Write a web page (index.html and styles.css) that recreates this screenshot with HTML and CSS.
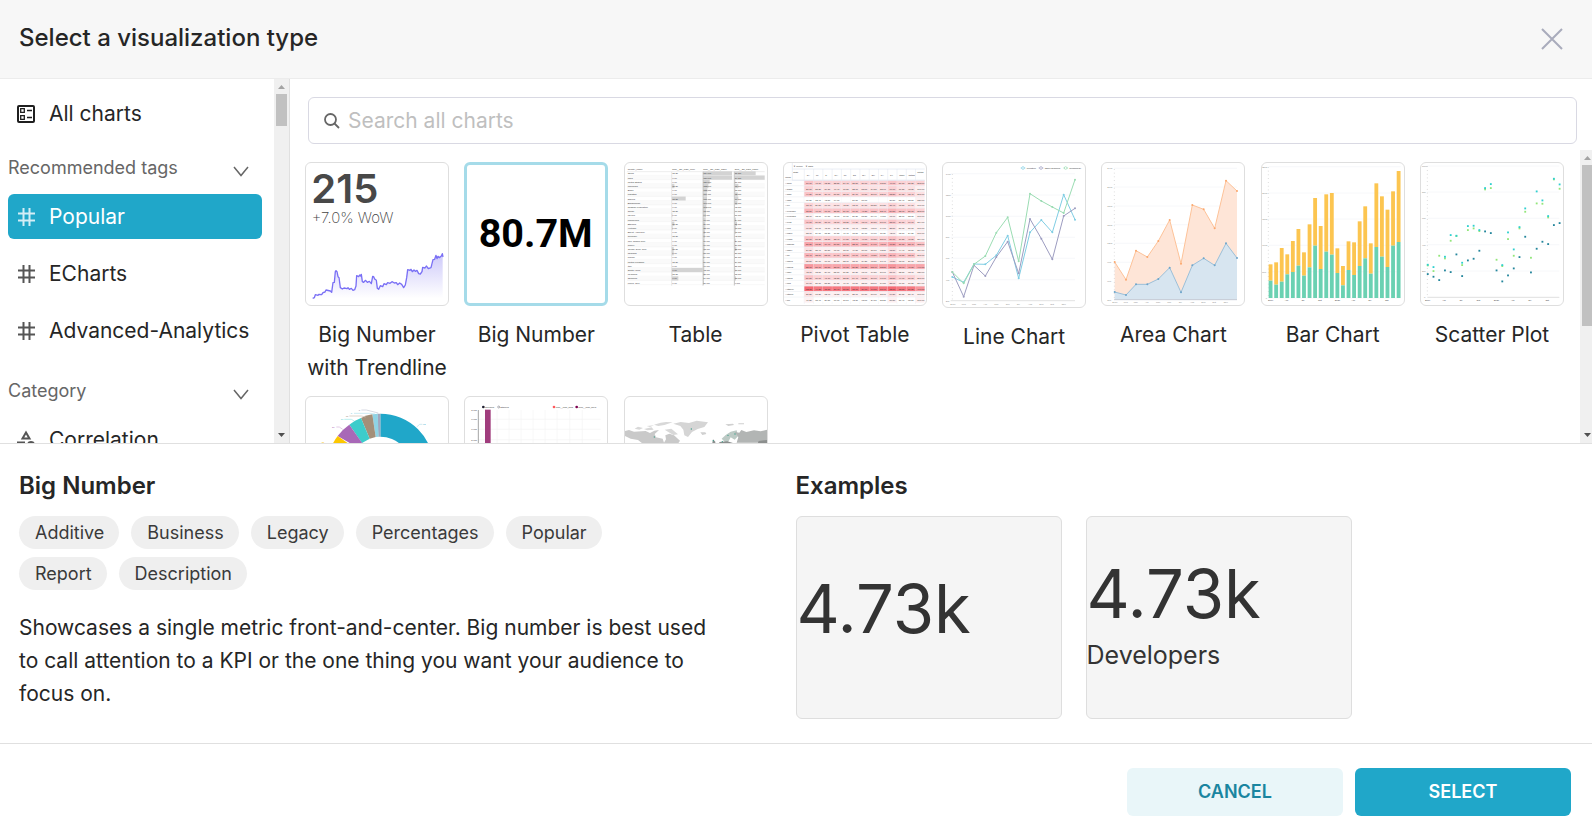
FILE: index.html
```html
<!DOCTYPE html>
<html lang="en">
<head>
<meta charset="utf-8">
<title>Select a visualization type</title>
<link rel="stylesheet" href="styles.css">
</head>
<body>
<div class="modal">
  <header class="modal-header">
    <h1 class="modal-title">Select a visualization type</h1>
    <button class="close" type="button" aria-label="Close">
      <svg width="22" height="22" viewBox="0 0 22 22"><path d="M1 1L21 21M21 1L1 21" stroke="#a9acbc" stroke-width="2" fill="none"/></svg>
    </button>
  </header>

  <div class="picker">
    <aside class="sidebar">
      <nav class="side-list">
        <button class="side-item" type="button">
          <svg class="side-icon" width="18" height="18" viewBox="0 0 18 18" fill="none" stroke="#1f1f1f"><rect x="1" y="1" width="16" height="16" rx="1" stroke-width="2"/><path d="M3.7 3.7h3.600v3.600h-3.600zM3.700 10.700h3.600v3.600h-3.600z" stroke-width="1.300"/><path d="M10 5.500h5M10 12.500h5" stroke-width="1.500"/></svg>
          All charts
        </button>
        <button class="side-heading side-heading-first" type="button">Recommended tags
          <svg class="chevron" width="16" height="11" viewBox="0 0 16 11"><path d="M1 1L8 9.500L15 1" stroke="#666" stroke-width="1.500" fill="none"/></svg>
        </button>
        <button class="side-item side-item-active" type="button">
          <svg class="side-icon" width="18" height="18" viewBox="0 0 18 18"><path d="M6.500 0V18M12.500 0V18M1 5.500H18M1 12.500H18" stroke="#d3eef6" stroke-width="2"/></svg>
          Popular
        </button>
        <button class="side-item" type="button">
          <svg class="side-icon" width="18" height="18" viewBox="0 0 18 18"><path d="M6.500 0V18M12.500 0V18M1 5.500H18M1 12.500H18" stroke="#555" stroke-width="2"/></svg>
          ECharts
        </button>
        <button class="side-item" type="button">
          <svg class="side-icon" width="18" height="18" viewBox="0 0 18 18"><path d="M6.500 0V18M12.500 0V18M1 5.500H18M1 12.500H18" stroke="#555" stroke-width="2"/></svg>
          Advanced-Analytics
        </button>
        <button class="side-heading side-heading-next" type="button">Category
          <svg class="chevron" width="16" height="11" viewBox="0 0 16 11"><path d="M1 1L8 9.500L15 1" stroke="#666" stroke-width="1.500" fill="none"/></svg>
        </button>
        <button class="side-item" type="button">
          <svg class="side-icon" width="18" height="20" viewBox="0 0 18 20" fill="none" stroke="#555" stroke-width="2"><path d="M9 2.500L12.500 8.500H5.500Z"/><path d="M1 12.500h6v6H1z"/><circle cx="14" cy="15" r="3"/></svg>
          Correlation
        </button>
      </nav>
      <div class="scrollbar">
        <svg width="15" height="15" viewBox="0 0 15 15"><path d="M4 10L7.500 6L11 10Z" fill="#a3a3a3"/></svg>
        <div class="thumb thumb-short"></div>
        <svg class="scroll-down" width="15" height="15" viewBox="0 0 15 15"><path d="M4 5L7.500 9L11 5Z" fill="#505050"/></svg>
      </div>
    </aside>

    <main class="browser">
      <label class="search">
        <svg width="16" height="16" viewBox="0 0 16 16" fill="none" stroke="#666" stroke-width="1.800"><circle cx="6.500" cy="6.500" r="5.500"/><path d="M10.500 10.500L15 15"/></svg>
        <input class="search-input" type="text" placeholder="Search all charts" aria-label="Search all charts">
      </label>
      <div class="gallery-wrap">
        <div class="gallery">
          <button class="tile" type="button">
            <span class="thumbnail"><svg viewBox="19 24 426 426">
              <defs><linearGradient id="trend" x1="0" y1="0" x2="0" y2="1"><stop offset="0" stop-color="#cfcbfa"/><stop offset="1" stop-color="#fff"/></linearGradient></defs>
              <text class="num-215" x="35" y="145">215</text>
              <text class="num-wow" x="36" y="205">+7.0% WoW</text>
              <path fill="url(#trend)" d="M40 430L80 408L97 410L110 350L122 400L165 405L175 362L186 362L190 380L214 385L221 364L237 402L250 390L275 382L302 388L314 398L325 343L350 348L362 358L372 336L395 340L402 312L429 300V430Z"/>
              <path class="trend-line" d="M39 430L44 428L47 419L55 421L58 418L66 419L70 413L76 411L79 405L92 408L96 412L100 383L104 382L107 350L109 347L112 350L115 365L118 368L122 398L128 402L133 399L142 401L145 398L149 403L155 400L160 406L165 404L169 393L171 362L177 365L180 360L183 363L185 358L188 380L192 382L197 376L203 382L209 379L215 386L219 364L222 365L225 372L230 376L233 400L237 403L242 392L249 395L253 386L260 389L264 383L271 385L277 380L284 384L290 383L294 389L300 384L306 388L312 398L317 390L321 368L324 344L331 346L334 343L338 350L343 345L347 349L352 346L357 356L362 357L367 350L369 337L376 339L380 333L386 341L394 338L400 314L405 313L409 301L412 311L415 304L419 308L425 303L428 296L430 306"/>
            </svg></span>
            <span class="tile-label">Big Number with Trendline</span>
          </button>
          <button class="tile tile-selected" type="button">
            <span class="thumbnail"><svg viewBox="496 24 426 426"><text class="num-807" x="708" y="277">80.7M</text></svg></span>
            <span class="tile-label">Big Number</span>
          </button>
          <button class="tile" type="button">
            <span class="thumbnail"><svg id="table-chart" viewBox="28 24 426 426"></svg></span>
            <span class="tile-label">Table</span>
          </button>
          <button class="tile" type="button">
            <span class="thumbnail"><svg id="pivot-chart" viewBox="28 24 426 426"></svg></span>
            <span class="tile-label">Pivot Table</span>
          </button>
          <button class="tile" type="button">
            <span class="thumbnail thumbnail-tall"><svg id="line-chart" viewBox="25 24 426 432"></svg></span>
            <span class="tile-label">Line Chart</span>
          </button>
          <button class="tile" type="button">
            <span class="thumbnail"><svg id="area-chart" viewBox="22 24 426 426"></svg></span>
            <span class="tile-label">Area Chart</span>
          </button>
          <button class="tile" type="button">
            <span class="thumbnail"><svg id="bar-chart" viewBox="22 24 426 426"></svg></span>
            <span class="tile-label">Bar Chart</span>
          </button>
          <button class="tile" type="button">
            <span class="thumbnail"><svg id="scatter-chart" viewBox="499 24 426 426"></svg></span>
            <span class="tile-label">Scatter Plot</span>
          </button>
          <button class="tile" type="button" aria-label="Pie Chart">
            <span class="thumbnail"><svg viewBox="19 37 426 426">
              <path fill="#20a7c9" d="M242 87A160 160 0 0 1 402 247H333A91 91 0 0 0 242 156Z"/>
              <path fill="#a1a6bd" d="M233 87H242V156H236Z"/>
              <path fill="#8fd3e4" d="M218 89L234 87L237 156L228 157Z"/>
              <path fill="#a38f79" d="M184 100Q201 91 218 89L228 157L210 162Z"/>
              <path fill="#3ccccb" d="M149 120Q165 107 184 100L210 162L187 175Z"/>
              <path fill="#a868b7" d="M114 154Q128 134 149 120L187 174L176 190Z"/>
              <path fill="#fcc700" d="M85 215Q95 178 114 154L175 197L160 230Z"/>
              <g fill="none" stroke-width="2"><path stroke="#c3c6d3" d="M185 76H200L236 85"/><path stroke="#b4e1ec" d="M163 86H210L226 88M351 127L360 119H368"/><path stroke="#cdbfb1" d="M149 94H185L198 97"/><path stroke="#9ae5e5" d="M134 104H155L164 109"/><path stroke="#d4b4db" d="M110 127H119L129 134"/></g>
              <g class="tiny"><text x="177" y="79" fill="#889">8</text><text x="153" y="89" fill="#6cc5db">5</text><text x="138" y="97" fill="#a38f79">15</text><text x="123" y="107" fill="#3ccccb">17</text><text x="97" y="130" fill="#a868b7">20</text><text x="370" y="122" fill="#20a7c9">98</text><text x="66" y="176" fill="#fcc700">21</text></g>
            </svg></span>
          </button>
          <button class="tile" type="button" aria-label="Histogram">
            <span class="thumbnail"><svg viewBox="496 37 426 426">
              <path d="M536 104H903M536 134H903M536 165H903M592 76V200M628 76V200M664 76V200M700 76V200M736 76V200M772 76V200M810 76V200M848 76V200" stroke="#f5f5f5" stroke-width="2"/>
              <path d="M536 76V200" stroke="#777" stroke-width="2"/>
              <rect x="556" y="75" width="17" height="130" fill="#a03d7d"/>
              <circle cx="551" cy="67" r="4" fill="#223"/><circle cx="597" cy="67" r="3" fill="none" stroke="#223"/><circle cx="763" cy="67" r="4" fill="#ff5a5f"/><circle cx="831" cy="67" r="4" fill="#7b0051"/>
              <g class="tiny dark"><text x="556" y="70">Grouped</text><text x="602" y="70">Stacked</text><text x="768" y="70">num__num_girls</text><text x="836" y="70">num__num_boys</text><text x="515" y="79">8.00k</text><text x="515" y="107">7.00k</text><text x="515" y="137">6.00k</text><text x="515" y="168">5.00k</text></g>
            </svg></span>
          </button>
          <button class="tile" type="button" aria-label="World Map">
            <span class="thumbnail"><svg viewBox="973 37 426 426">
              <path fill="#c9c9c9" d="M973 139L985 136L1000 141L1035 139L1048 145L1061 138L1075 136L1062 148L1066 158L1086 162L1090 174L1096 164L1094 152L1106 147L1120 152L1138 168L1130 180H1030L1012 166L990 162L973 154Z"/>
              <path fill="#d8d8d8" d="M1060 120L1080 114L1096 112L1116 113L1091 121L1073 124ZM1002 132L1012 126L1027 130L1016 135ZM1030 133L1053 128L1059 135L1040 137ZM1092 135L1112 132L1132 149L1118 151L1103 142ZM1038 124L1060 122L1048 127Z"/>
              <path fill="#d5d5d5" d="M1118 117L1140 112L1165 115L1188 108L1222 113L1211 127L1191 133L1174 142L1162 157L1151 152L1148 135L1139 124Z"/>
              <path fill="#d0d0d0" d="M1199 143H1214L1217 148L1205 151ZM1274 119L1297 117L1300 121L1283 124ZM1313 116H1330V119H1313Z"/>
              <path fill="#bccac5" d="M1263 162L1275 151L1290 141L1308 137L1312 155L1302 165L1290 158L1283 171L1275 174Z"/>
              <path fill="#b2b5b4" d="M1302 142L1316 144L1322 136L1337 142L1360 137L1380 140L1399 135V174H1308L1313 157Z"/>
              <path fill="#8c8f8e" d="M1237 164L1244 171V180H1234ZM1374 169L1399 166V200H1362ZM1256 172L1280 170L1300 176V200H1256Z"/>
              <g fill="#3e9d8a"><circle cx="1172" cy="133" r="2"/><circle cx="1061" cy="157" r="2"/><circle cx="1282" cy="152" r="2"/><circle cx="1303" cy="148" r="2"/><circle cx="1238" cy="168" r="2"/><circle cx="1265" cy="171" r="2"/></g>
            </svg></span>
          </button>
        </div>
        <div class="scrollbar scrollbar-edge">
          <svg width="15" height="15" viewBox="0 0 15 15"><path d="M4 10L7.500 6L11 10Z" fill="#a3a3a3"/></svg>
          <div class="thumb thumb-long"></div>
          <svg class="scroll-down" width="15" height="15" viewBox="0 0 15 15"><path d="M4 5L7.500 9L11 5Z" fill="#505050"/></svg>
        </div>
      </div>
    </main>
  </div>

  <section class="details">
    <div class="about">
      <h2 class="section-title">Big Number</h2>
      <div class="tags"><span class="tag">Additive</span><span class="tag">Business</span><span class="tag">Legacy</span><span class="tag">Percentages</span><span class="tag">Popular</span><span class="tag">Report</span><span class="tag">Description</span></div>
      <p class="description">Showcases a single metric front-and-center. Big number is best used to call attention to a KPI or the one thing you want your audience to focus on.</p>
    </div>
    <div class="examples">
      <h2 class="section-title">Examples</h2>
      <div class="cards">
        <div class="card"><div class="card-number">4.73k</div></div>
        <div class="card"><div class="card-number">4.73k</div><div class="card-caption">Developers</div></div>
      </div>
    </div>
  </section>

  <footer class="modal-footer">
    <button class="btn btn-cancel" type="button">CANCEL</button>
    <button class="btn btn-select" type="button">SELECT</button>
  </footer>
</div>
<script src="charts.js"></script>
</body>
</html>
```
FILE: styles.css
```css
* { box-sizing: border-box; }
body { margin: 0; font-family: Inter, "Liberation Sans", sans-serif; font-size: 21px; line-height: 33px; color: #262626; background: #fff; }
button { font: inherit; color: inherit; background: none; border: 0; padding: 0; margin: 0; cursor: pointer; }
h1, h2, p { margin: 0; }

.modal { display: flex; flex-direction: column; height: 100vh; overflow: hidden; }
.modal-header { display: flex; align-items: center; justify-content: space-between; flex: none; height: 79px; padding: 0 29px 2px 19px; background: #f7f7f7; border-bottom: 1px solid #ececec; }
.modal-title { font-size: 24px; font-weight: 500; line-height: 36px; }
.close { display: flex; padding: 2px 0 0; }

.picker { display: flex; flex: 1; min-height: 0; border-bottom: 1px solid #e0e0e0; }
.sidebar { display: flex; flex: none; width: 290px; border-right: 1px solid #e0e0e0; overflow: hidden; }
.side-list { display: flex; flex-direction: column; flex: 1; gap: 12px; padding: 12px 12px 0 8px; overflow: hidden; }
.side-item { display: flex; align-items: center; flex: none; gap: 14px; height: 45px; padding: 0 9px; border-radius: 6px; white-space: nowrap; }
.side-item-active { background: #20a7c9; color: #fff; }
.side-icon { flex: none; }
.side-heading { display: flex; align-items: center; justify-content: space-between; flex: none; height: 28px; padding: 0 13px 2px 0; font-size: 18px; color: #666; }
.side-heading-first { margin-top: 6px; }
.side-heading-next { margin-top: 12px; }
.chevron { margin-top: 9px; }

.scrollbar { display: flex; flex-direction: column; flex: none; width: 15px; background: #f0f0f0; overflow: hidden; }
.scrollbar svg { display: block; flex: none; }
.scrollbar-edge { width: 12px; }
.thumb { flex: none; width: 11px; margin-left: 2px; background: #c1c1c1; }
.thumb-short { height: 32px; }
.thumb-long { height: 161px; }
.scroll-down { margin-top: auto; }

.browser { display: flex; flex-direction: column; flex: 1; min-width: 0; }
.search { display: flex; align-items: center; flex: none; gap: 8px; height: 47px; margin: 18px 15px 6px 18px; padding: 0 15px; border: 1px solid #d9d9e3; border-radius: 6px; }
.search-input { flex: 1; min-width: 0; padding: 0; border: 0; outline: 0; font: inherit; color: #262626; }
.search-input::placeholder { color: #bfbfbf; opacity: 1; }
.gallery-wrap { display: flex; flex: 1; min-height: 0; }
.gallery { display: grid; grid-template-columns: repeat(auto-fill, 144px); justify-content: space-between; align-content: start; flex: 1; gap: 12px 15px; padding: 12px 16px 0 15px; overflow: hidden; }
.tile { display: flex; flex-direction: column; align-items: center; gap: 12px; min-width: 0; }
.thumbnail { display: block; width: 144px; height: 144px; border: 1px solid #dedede; border-radius: 6px; overflow: hidden; }
.thumbnail-tall { height: 146px; }
.thumbnail svg { display: block; width: 100%; height: 100%; }
.tile-selected .thumbnail { border: 3px solid #a5dbe9; }
.tile-label { text-align: center; }

.num-215 { font-size: 120px; font-weight: 600; fill: #484848; }
.num-wow { font-size: 45px; font-weight: 200; fill: #444; }
.num-807 { font-family: Roboto, sans-serif; font-size: 122px; font-weight: 700; fill: #000; text-anchor: middle; }
.trend-line { fill: none; stroke: #7a70f5; stroke-width: 4; stroke-linejoin: round; }
.tiny { font-family: "Liberation Sans", sans-serif; font-size: 7px; fill: #888; }
.tiny.dark { fill: #333; }
.tiny.strong { fill: #333; }

.details { display: grid; grid-template-columns: 1fr 1fr; flex: none; padding: 23px 20px 24px 19px; }
.about { padding-right: 88px; }
.section-title { margin-bottom: 11px; font-size: 24px; font-weight: 600; line-height: 38px; }
.tags { display: flow-root; margin-bottom: 13px; }
.tag { float: left; height: 33px; margin: 0 12px 8px 0; padding: 0 15px 0 16px; border-radius: 17px; background: #efefef; font-size: 18px; color: #3a3a3a; }
.cards { display: flex; gap: 24px; }
.card { display: flex; flex-direction: column; justify-content: center; width: 266px; height: 203px; padding-bottom: 9px; border: 1px solid #dedede; border-radius: 6px; background: #f5f5f5; color: #333; }
.card-number { padding-bottom: 8px; font-size: 67px; line-height: 76px; }
.card-caption { font-size: 25px; line-height: 30px; }

.modal-footer { display: flex; justify-content: flex-end; flex: none; gap: 12px; padding: 24px 21px 21px; border-top: 1px solid #e0e0e0; }
.btn { width: 216px; height: 48px; padding-bottom: 1px; border-radius: 6px; font-size: 18px; font-weight: 600; }
.btn-cancel { background: #e9f6f9; color: #1a85a0; }
.btn-select { background: #20a7c9; color: #fff; }
```
FILE: charts.js
```js
// Thumbnail drawings, three units to a pixel.
function put(id, markup) { document.getElementById(id).innerHTML = markup; }
function rect(x, y, w, h, fill) { return `<rect x="${x}" y="${y}" width="${w}" height="${h}" fill="${fill}"/>`; }
function text(x, y, s, strong) { return `<text class="tiny${strong ? ' strong' : ''}" x="${x}" y="${y}">${s}</text>`; }
function line(x1, y1, x2, y2, c = '#f3f4f7') { return `<path d="M${x1} ${y1}L${x2} ${y2}" stroke="${c}" stroke-width="2"/>`; }
const months = ['2019', 'Feb', 'Mar', 'Apr', 'May', 'Jun', 'Jul', 'Aug', 'Sep', 'Oct', 'Nov'];

// Table
(function () {
  const names = ['China', 'India', 'United States', 'Indonesia', 'Brazil', 'Pakistan', 'Nigeria', 'Bangladesh', 'Russian Federation', 'Japan', 'Mexico', 'Philippines', 'Ethiopia', 'Vietnam', 'Egypt, Arab Rep.', 'Germany', 'Iran, Islamic Rep.', 'Turkey', 'Congo, Dem. Rep.', 'Thailand', 'France', 'United Kingdom', 'Italy', 'South Africa', 'Myanmar', 'Tanzania', 'Korea, Rep.'];
  const a = { 3: 8, 6: 42, 10: 2, 12: 8, 13: 3, 18: 6, 19: 6, 23: 93, 24: 2, 25: 20 };
  const b = [87, 87, 20, 16, 13, 12, 12, 11, 10, 9, 9, 8, 7, 7, 6, 6, 5, 5, 5, 4, 4, 4, 4, 4, 4, 3, 3];
  const c = [64, 91, 3, 12, 3, 10, 12, 9, 2, 2, 2, 5, 8, 5, 4, 2, 4, 3, 6, 2, 2, 2, 2, 3, 2, 5, 2];
  let s = text(36, 45, 'country_name', 1) + text(170, 45, 'sum__SP_POP_0014', 1) + text(263, 45, 'sum__SP_POP_TOTL', 1) + text(357, 45, 'sum__SP_POP_TOTL', 1) + line(34, 50, 447, 50, '#e4e4e4');
  names.forEach((n, i) => {
    const y = 55 + i * 12.6;
    if (i % 2) s += rect(34, y - 6, 413, 12.6, '#fafafa');
    s += line(34, y + 6.3, 447, y + 6.3, '#f4f4f4');
    if (a[i]) s += rect(168, y - 6, a[i], 12.6, '#d3d3d3');
    s += rect(262, y - 6, b[i], 12.6, '#d3d3d3') + rect(356, y - 6, c[i], 12.6, '#d3d3d3');
    s += text(36, y + 3, n, 1) + text(170, y + 3, i % 3 ? '0.00' : '15.2k', 1) + text(263, y + 3, (134 - i * 4) + '.0M', 1) + text(357, y + 3, (87 - i * 3) + '.1M', 1);
  });
  put('table-chart', s + line(168, 50, 168, 392, '#ddd') + line(262, 50, 262, 392, '#bbb') + line(356, 50, 356, 392, '#bbb'));
})();

// Pivot table
(function () {
  const names = ['Aaron', 'Abigail', 'Adam', 'Aidan', 'Alex', 'Alexander', 'Alexandra', 'Alexis', 'Alicia', 'Allison', 'Alyssa', 'Amanda', 'Amber', 'Amy', 'Andrea', 'Andrew', 'Angel', 'Angela', 'Anna', 'Anthony', 'Antonio', 'April'];
  const heat = [4, 1, 3, 0, 1, 4, 1, 2, 1, 1, 2, 5, 2, 3, 1, 7, 0, 3, 2, 8, 1, 1];
  const shade = k => `rgb(${255 - k},${255 - k * 15},${255 - k * 14})`;
  const cols = ['CA', 'FL', 'IL', 'MA', 'MI', 'NJ', 'NY', 'OH', 'PA', 'TX', 'other', 'Totals'];
  let s = text(56, 36, '▼ metric', 1) + text(92, 36, '▼ state', 1) + text(56, 53, 'state', 1) + text(32, 70, 'name', 1) + text(428, 53, 'Totals', 1);
  for (let x = 0; x <= 12; x++) s += line(89 + x * 27.8, 42, 89 + x * 27.8, 446, '#e8edf5');
  cols.forEach((c, j) => { s += text(96 + j * 27.8, 62, c, 1); });
  names.forEach((n, i) => {
    const y = 76 + i * 16.7, h = heat[i];
    s += text(32, y + 11, n, 1);
    cols.forEach((c, j) => {
      let k = Math.max(0, h + ((i * 5 + j * 3) % 3) - 1 + (j === 0 || j === 9 ? 1 : 0));
      if (i === 3 && j > 2 && j < 9) k = 0;
      s += rect(89 + j * 27.8, y, 27.2, 16, shade(k));
      if (!(i === 3 && (j === 4 || j === 7 || j === 8))) s += text(94 + j * 27.8, y + 11, ((i * 17 + j * 31) % 80 + 10) + '.' + (i + j) % 9 + 'k', 1);
    });
    s += rect(422, y, 28, 16, shade(Math.max(1, h - 1))) + text(428, y + 11, (h * 47 + 120) + '.0k', 1) + line(28, y - 0.5, 450, y - 0.5, '#edf0f5');
  });
  put('pivot-chart', s + line(53, 24, 53, 76, '#e0e6f0') + line(53, 42, 450, 42, '#e0e6f0') + line(53, 76, 450, 76, '#e0e6f0'));
})();

function dots(pts, c) { return pts.map(p => `<circle cx="${p[0]}" cy="${p[1]}" r="3" fill="${c}"/>`).join(''); }
function ticks(x, top, bottom) { return `<path d="M${x} ${top}V${bottom}" stroke="#ccc" stroke-width="3" stroke-dasharray="2 9.300"/>`; }

// Line chart
(function () {
  const xs = [53, 87, 118, 152, 185, 219, 252, 286, 320, 353, 387, 421];
  const series = [
    ['#7fcde3', [366, 382, 327, 328, 301, 242, 370, 232, 195, 232, 119, 194]],
    ['#9c9cc0', [351, 425, 331, 363, 306, 260, 355, 192, 251, 313, 183, 160]],
    ['#9adcb2', [351, 385, 328, 303, 233, 187, 319, 116, 138, 156, 174, 74]]
  ];
  let s = '';
  [56, 120, 184, 247, 310, 374].forEach((y, i) => { s += line(48, y, 421, y) + text(33, y + 3, (140 - i * 20) + 'k'); });
  s += text(33, 440, '20k') + line(48, 437, 421, 437, '#d5d5d5') + ticks(53, 58, 437);
  months.forEach((m, i) => { s += text(xs[i] - 6, 450, m); });
  series.forEach(([c, ys]) => {
    const p = ys.map((y, i) => [xs[i], y]);
    s += `<polyline points="${p.join(' ')}" fill="none" stroke="${c}" stroke-width="3"/>` + dots(p, c);
  });
  [['Furniture', 265, 0], ['Office Supplies', 319, 1], ['Technology', 393, 2]].forEach(([n, x, k]) => {
    s += line(x - 7, 39, x + 7, 39, series[k][0]) + `<circle cx="${x}" cy="39" r="4" fill="#fff" stroke="${series[k][0]}" stroke-width="2"/>` + text(x + 11, 42, n, 1);
  });
  put('line-chart', s);
})();

// Area chart
(function () {
  const xs = [60, 94, 124, 158, 191, 225, 259, 293, 327, 360, 394, 427];
  const top = [321, 374, 287, 306, 258, 195, 326, 150, 163, 220, 77, 108].map((y, i) => [xs[i], y]);
  const low = [411, 420, 388, 388, 372, 338, 412, 331, 310, 331, 265, 309].map((y, i) => [xs[i], y]);
  let s = '';
  [40, 96, 153, 209, 265, 322, 378, 434].forEach((y, i) => { s += line(58, y, 427, y) + text(38, y + 3, (240 - i * 30) + 'k'); });
  s += `<polygon points="${top.join(' ')} 427,434 60,434" fill="#fee5d7"/><polygon points="${low.join(' ')} 427,434 60,434" fill="#d7e5f0"/>`;
  s += `<polyline points="${top.join(' ')}" fill="none" stroke="#fdc298" stroke-width="3"/><polyline points="${low.join(' ')}" fill="none" stroke="#9bbfd8" stroke-width="3"/>`;
  s += dots(top, '#fba76d') + dots(low, '#6ea5ca') + ticks(59, 42, 434) + line(58, 434, 427, 434, '#b5bcc8');
  months.forEach((m, i) => { s += text(xs[i] - 7, 444, m); });
  put('area-chart', s);
})();

// Bar chart
(function () {
  const top = [328, 322, 279, 298, 258, 222, 292, 208, 129, 213, 118, 114, 280, 333, 259, 262, 199, 154, 265, 85, 124, 164, 109, 48];
  const mid = [377, 389, 380, 358, 351, 332, 362, 337, 272, 342, 290, 299, 354, 391, 345, 360, 333, 310, 356, 276, 305, 336, 272, 261];
  let s = '';
  [35, 114, 192, 271, 350, 429].forEach((y, i) => { s += line(42, y, 438, y) + text(i === 5 ? 33 : 23, y + 3, i === 5 ? '0' : (250 - i * 50) + 'k'); });
  s += ticks(41, 36, 429);
  top.forEach((t, i) => {
    const x = 42 + i * 16.7;
    s += rect(x, t, 11.5, mid[i] - t, '#fcc550') + rect(x, mid[i], 11.5, 429 - mid[i], '#6ad1b2');
  });
  ['2019', 'Apr', 'Jul', 'Oct', '2020', 'Apr', 'Jul', 'Oct'].forEach((m, i) => { s += text(40 + i * 50.1, 439, m, 1); });
  put('bar-chart', s);
})();

// Scatter plot; null marks a month without a reading
(function () {
  const dark = [357, 365, 375, 346, 351, 298, 363, 316, 311, 287, 229, 234, 346, 379, 361, 340, 306, 245, 352, 281, 260, 267, 210, 204];
  const cyan = [329, 336, null, 305, 240, 242, 323, 213, 212, 225, 99, 87, null, 330, 232, 283, 216, 160, null, 109, 136, 183, 71, 88];
  const green = [331, 348, 302, 310, 257, 243, 330, 225, 220, 228, 103, 99, 314, 333, 252, 302, 220, 170, 308, 145, 146, 187, 73, 101];
  let s = '';
  [33, 111, 190, 269, 348].forEach((y, i) => { s += line(518, y, 914, y) + text(502, y + 3, (100 - i * 20) + 'k'); });
  s += text(508, 430, '0') + line(518, 427, 914, 427, '#d0d0d0') + ticks(518, 34, 427);
  [[green, '#92e67a'], [cyan, '#2fd0cf'], [dark, '#24869c']].forEach(([ys, c]) => {
    ys.forEach((y, i) => { if (y !== null) s += rect(516.5 + i * 17.2, y - 2.5, 5.5, 5.5, c); });
  });
  ['2019', 'Apr', 'Jul', 'Oct', '2020', 'Apr', 'Jul', 'Oct'].forEach((m, i) => { s += text(511 + i * 51.6, 438, m, 1); });
  put('scatter-chart', s);
})();
```
